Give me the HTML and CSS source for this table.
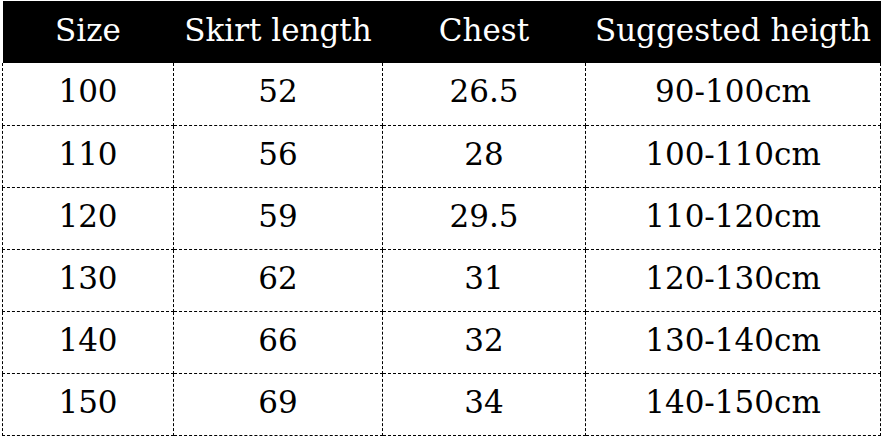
FILE: index.html
```html
<!DOCTYPE html>
<html>
<head>
<meta charset="utf-8">
<link rel="stylesheet" href="styles.css">
</head>
<body>
<table class="size-table">
  <colgroup>
    <col class="c1"><col class="c2"><col class="c3"><col class="c4">
  </colgroup>
  <thead>
    <tr><th>Size</th><th>Skirt length</th><th>Chest</th><th>Suggested heigth</th></tr>
  </thead>
  <tbody>
    <tr><td>100</td><td>52</td><td>26.5</td><td>90-100cm</td></tr>
    <tr><td>110</td><td>56</td><td>28</td><td>100-110cm</td></tr>
    <tr><td>120</td><td>59</td><td>29.5</td><td>110-120cm</td></tr>
    <tr><td>130</td><td>62</td><td>31</td><td>120-130cm</td></tr>
    <tr><td>140</td><td>66</td><td>32</td><td>130-140cm</td></tr>
    <tr><td>150</td><td>69</td><td>34</td><td>140-150cm</td></tr>
  </tbody>
</table>
</body>
</html>
```
FILE: styles.css
```css
html, body {
  margin: 0;
  padding: 0;
  background: #fff;
}
.size-table {
  margin: 1px 0 0 2px;
  border-collapse: collapse;
  table-layout: fixed;
  width: 878px;
  font-family: "DejaVu Serif", serif;
  font-size: 31px;
  color: #000;
}
.c1 { width: 171px; }
.c2 { width: 209px; }
.c3 { width: 203px; }
.c4 { width: 295px; }
.size-table th {
  background: #000;
  color: #fff;
  font-weight: normal;
  height: 62px;
  padding: 0 0 4px 0;
  text-align: center;
  white-space: nowrap;
  box-sizing: border-box;
}
.size-table td {
  height: 62px;
  padding: 0 0 5px 0;
  text-align: center;
  border: 1px dashed #000;
  box-sizing: border-box;
  white-space: nowrap;
}
.size-table tbody tr:first-child td {
  border-top: none;
}
```
